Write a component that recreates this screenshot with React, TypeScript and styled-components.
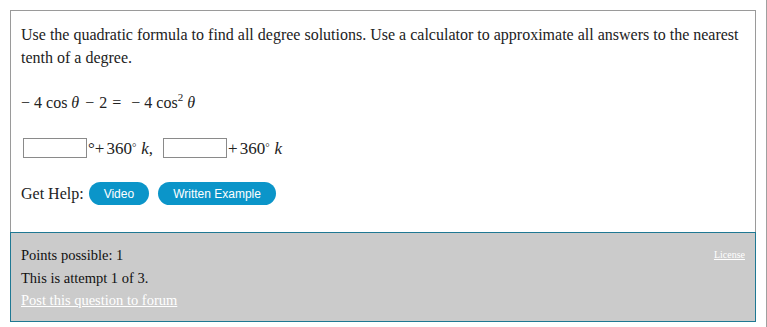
import React from "react";
import styled, { createGlobalStyle } from "styled-components";

const Global = createGlobalStyle`
  html, body { margin: 0; padding: 0; background: #fff; }
  body { font-family: "Liberation Serif", "Times New Roman", serif; color: #222; }
`;

const Page = styled.div`
  width: 767px;
  height: 327px;
  border-right: 1px solid #a0a0a0;
  padding: 10px 0 0 10px;
  box-sizing: border-box;
`;

const Card = styled.div`
  width: 746px;
  box-sizing: border-box;
`;

const Question = styled.div`
  border: 1px solid #9a9a9a;
  border-bottom: none;
  padding: 12px 10px 27px 10px;
  font-size: 16px;
  line-height: 23px;
`;

const Prompt = styled.p`
  margin: 0 0 22px 0;
`;

const MathLine = styled.div`
  font-family: "Liberation Serif", serif;
  font-size: 16px;
  line-height: 23px;
  margin: 0 0 24px 0;
  display: flex;
  align-items: baseline;
`;

const Op = styled.span<{ $l?: number; $r?: number }>`
  margin-left: ${(p) => p.$l ?? 0}px;
  margin-right: ${(p) => p.$r ?? 0}px;
`;

const It = styled.i`
  font-style: italic;
`;

const Sup = styled.sup<{ $r?: number }>`
  font-size: 11px;
  line-height: 0;
  position: relative;
  top: -1px;
  margin-right: ${(p) => p.$r ?? 0}px;
`;

const AnswerRow = styled.div`
  display: flex;
  align-items: center;
  height: 20px;
  font-size: 17px;
  margin-left: 2px;
  margin-bottom: 24px;
`;

const Box = styled.input`
  width: 64px;
  height: 20px;
  box-sizing: border-box;
  border: 1px solid #8a8a8a;
  border-radius: 0;
  padding: 0 2px;
  margin: 0;
  background: #fff;
`;

const HelpRow = styled.div`
  display: flex;
  align-items: center;
  height: 23px;
  font-size: 16px;
`;

const HelpButton = styled.button<{ $gap: number }>`
  font-family: "Liberation Sans", Arial, sans-serif;
  font-size: 12px;
  color: #fff;
  background: #0b95c9;
  border: none;
  border-radius: 12px;
  height: 23px;
  padding: 0 15px;
  margin-left: ${(p) => p.$gap}px;
  cursor: pointer;
`;

const Footer = styled.div`
  border: 1px solid #1f7893;
  background: #cbcbcb;
  padding: 11px 10px 9px 10px;
  font-size: 14.5px;
  line-height: 22.5px;
  color: #111;
  display: flex;
  justify-content: space-between;
`;

const FooterLines = styled.div`
  display: flex;
  flex-direction: column;
`;

const FooterLink = styled.a<{ $small?: boolean }>`
  color: #fff;
  text-decoration: underline;
  font-size: ${(p) => (p.$small ? "10px" : "14.5px")};
  line-height: 22.5px;
`;

export default function App() {
  return (
    <>
      <Global />
      <Page>
        <Card>
          <Question>
            <Prompt>
              Use the quadratic formula to find all degree solutions. Use a calculator to approximate all
              answers to the nearest tenth of a degree.
            </Prompt>
            <MathLine>
              <span>−</span>
              <Op $l={4}>4</Op>
              <Op $l={4}>cos</Op>
              <Op $l={4}><It>θ</It></Op>
              <Op $l={6} $r={5}>−</Op>
              <span>2</span>
              <Op $l={5} $r={10}>=</Op>
              <Op $r={4}>−</Op>
              <span>4</span>
              <Op $l={4}>cos<Sup>2</Sup></Op>
              <Op $l={4}><It>θ</It></Op>
            </MathLine>
            <AnswerRow>
              <Box aria-label="answer 1" />
              <Op $l={1}>°</Op>
              <Op $r={2}>+</Op>
              <span>360</span>
              <Sup $r={5}>°</Sup>
              <It>k</It>
              <span>,</span>
              <Op $l={10} />
              <Box aria-label="answer 2" />
              <Op $l={1} $r={2}>+</Op>
              <span>360</span>
              <Sup $r={5}>°</Sup>
              <It>k</It>
            </AnswerRow>
            <HelpRow>
              <span>Get Help:</span>
              <HelpButton $gap={5}>Video</HelpButton>
              <HelpButton $gap={9}>Written Example</HelpButton>
            </HelpRow>
          </Question>
          <Footer>
            <FooterLines>
              <span>Points possible: 1</span>
              <span>This is attempt 1 of 3.</span>
              <FooterLink href="#">Post this question to forum</FooterLink>
            </FooterLines>
            <FooterLink href="#" $small>License</FooterLink>
          </Footer>
        </Card>
      </Page>
    </>
  );
}
